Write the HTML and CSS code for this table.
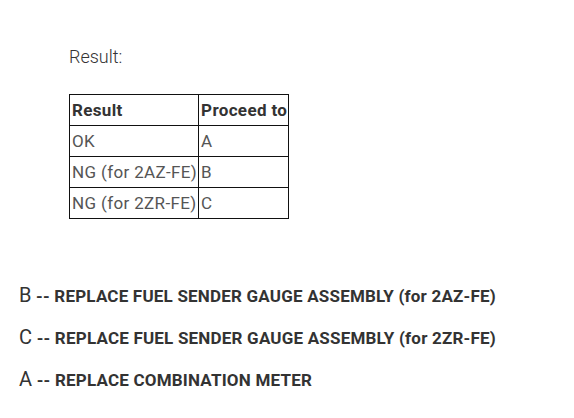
FILE: index.html
```html
<!DOCTYPE html>
<html>
<head>
<meta charset="utf-8">
<link rel="stylesheet" href="styles.css">
</head>
<body>
<div class="page">
  <div class="intro">
    <p class="label">Result:</p>
    <table class="result-table">
      <tr><th>Result</th><th>Proceed to</th></tr>
      <tr><td>OK</td><td>A</td></tr>
      <tr><td>NG (for 2AZ-FE)</td><td>B</td></tr>
      <tr><td>NG (for 2ZR-FE)</td><td>C</td></tr>
    </table>
  </div>
  <div class="steps">
    <p class="step"><span class="letter">B</span> -- REPLACE FUEL SENDER GAUGE ASSEMBLY (for 2AZ-FE)</p>
    <p class="step"><span class="letter">C</span> -- REPLACE FUEL SENDER GAUGE ASSEMBLY (for 2ZR-FE)</p>
    <p class="step"><span class="letter">A</span> -- REPLACE COMBINATION METER</p>
  </div>
</div>
</body>
</html>
```
FILE: styles.css
```css
html, body {
  margin: 0;
  padding: 0;
  background: #fff;
}
body {
  font-family: Roboto, "Liberation Sans", sans-serif;
  color: #333;
}
.page {
  padding-top: 44px;
}
.intro {
  padding-left: 69px;
}
.label {
  margin: 0;
  font-size: 18px;
  font-weight: 300;
  line-height: 26px;
  color: #333;
}
.result-table {
  margin-top: 24px;
  border-collapse: collapse;
  font-size: 17px;
  letter-spacing: 0.35px;
}
.result-table th,
.result-table td {
  border: 1px solid #111;
  height: 30px;
  padding: 0 1px 0 2px;
  text-align: left;
  vertical-align: middle;
  line-height: 20px;
}
.result-table th {
  font-weight: 700;
  color: #333;
}
.result-table td {
  font-weight: 400;
  color: #555;
}
.steps {
  margin-top: 64px;
  padding-left: 19px;
}
.step {
  margin: 0 0 17px;
  font-size: 17px;
  font-weight: 700;
  line-height: 24px;
  letter-spacing: 0.2px;
  color: #333;
}
.letter {
  font-size: 20px;
  font-weight: 400;
}
```
